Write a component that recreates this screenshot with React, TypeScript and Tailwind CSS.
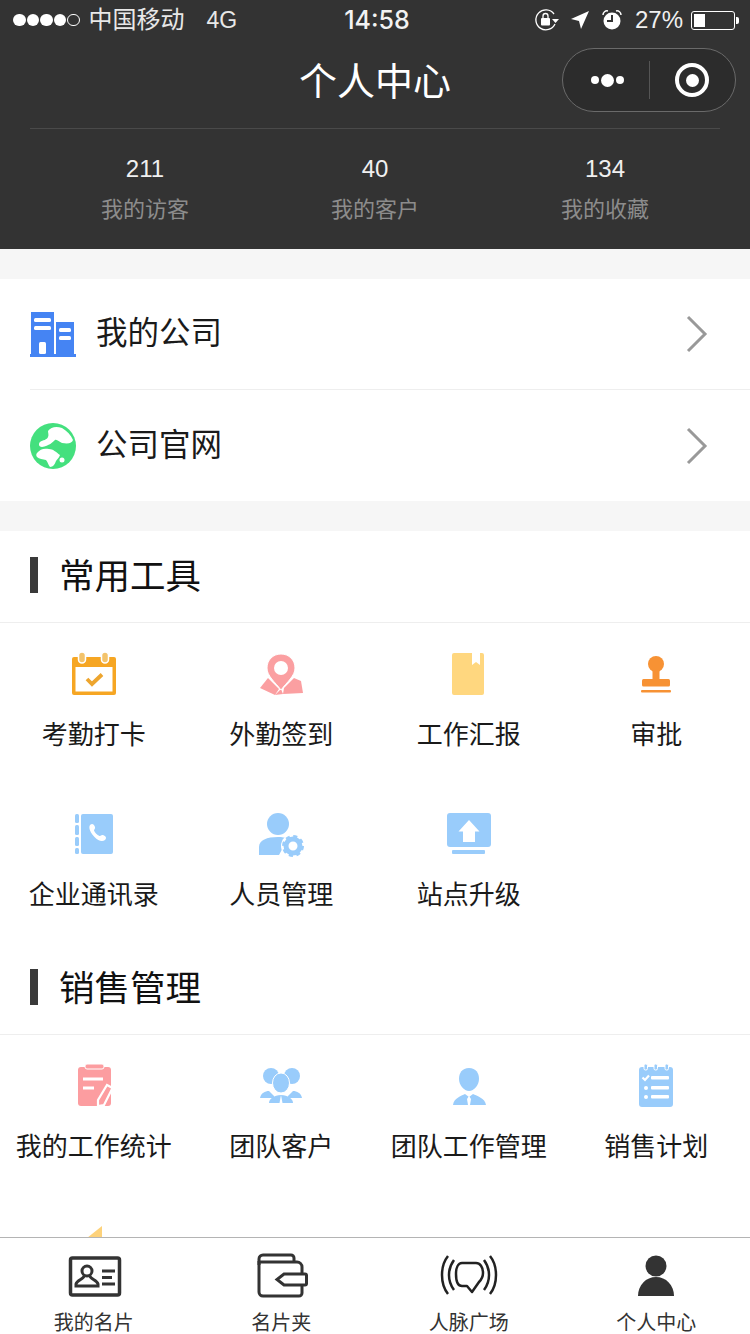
import type { ReactNode } from 'react'

const FONT = 'font-["Liberation_Sans","Noto_Sans_CJK_SC",sans-serif]'

function Svg48({ children }: { children: ReactNode }) {
  return (
    <svg width="48" height="48" viewBox="0 0 48 48">
      {children}
    </svg>
  )
}

function CalendarIcon() {
  return (
    <Svg48>
      <rect x="2" y="7" width="44" height="38" rx="2" fill="#f6a623" />
      <rect x="5.500" y="17" width="37" height="24.500" fill="#fff" />
      <rect x="8.500" y="2" width="7" height="11" rx="3.500" fill="#f3c36b" stroke="#fff" strokeWidth="1.500" />
      <rect x="31.500" y="2" width="7" height="11" rx="3.500" fill="#f3c36b" stroke="#fff" strokeWidth="1.500" />
      <path d="M17 29l5 5 10-9.500" fill="none" stroke="#eda52e" strokeWidth="3.800" />
    </Svg48>
  )
}

function PinIcon() {
  return (
    <Svg48>
      <path d="M3 38l8-10 11 11-4 6z" fill="#fb9fa1" />
      <path d="M27 38l10-10 7 3 2 12-20 1z" fill="#fb9fa1" />
      <path d="M18 45l6-6 2 5z" fill="#fb9fa1" />
      <path d="M24 4c8 0 14 6 14 14 0 8-8 14-14 22-6-8-14-14-14-22 0-8 6-14 14-14z" fill="#fb9fa1" stroke="#fff" strokeWidth="1" />
      <circle cx="24" cy="18" r="7" fill="#fff" />
    </Svg48>
  )
}

function BookIcon() {
  return (
    <Svg48>
      <path d="M9 3h18v12l4-3 4 3V3h2a2 2 0 0 1 2 2v38a2 2 0 0 1-2 2H9a2 2 0 0 1-2-2V5a2 2 0 0 1 2-2z" fill="#ffd77f" />
    </Svg48>
  )
}

function StampIcon() {
  return (
    <Svg48>
      <circle cx="24" cy="14" r="8" fill="#f79234" />
      <rect x="20.500" y="18" width="7" height="13" fill="#f79234" />
      <rect x="10" y="29" width="28" height="7.500" rx="1.500" fill="#f79234" />
      <rect x="9" y="40" width="30" height="2.500" rx="1" fill="#f79234" />
    </Svg48>
  )
}

function ContactIcon() {
  return (
    <Svg48>
      <rect x="5" y="4" width="4" height="9" rx="1.500" fill="#99ccfb" />
      <rect x="5" y="15" width="4" height="10" rx="1.500" fill="#99ccfb" />
      <rect x="5" y="27" width="4" height="9" rx="1.500" fill="#99ccfb" />
      <rect x="5" y="38" width="4" height="6" rx="1.500" fill="#99ccfb" />
      <rect x="11" y="4" width="32" height="40" rx="2" fill="#99ccfb" />
      <path d="M20 15c2-2 4-1 5 2 .5 1.500-1 2.500-1 3.500 1 2.500 3 4.500 5.500 5.500 1 0 2-1.500 3.500-1 3 1 4 3 2 5-3 2.500-7 .5-10.500-3-3.500-3.500-6.500-9-4.500-12z" fill="#fff" />
    </Svg48>
  )
}

function PersonGearIcon() {
  return (
    <Svg48>
      <circle cx="21" cy="14" r="11" fill="#99ccfb" />
      <path d="M2 45v-8c0-7 8-10 19-10 4 0 7 .5 10 1.500L22 45z" fill="#99ccfb" />
      <circle cx="36" cy="36" r="12" fill="#fff" />
      <circle cx="36" cy="36" r="7" fill="none" stroke="#99ccfb" strokeWidth="5" />
      <circle cx="36" cy="36" r="9.500" fill="none" stroke="#99ccfb" strokeWidth="3" strokeDasharray="4 3.450" />
    </Svg48>
  )
}

function UploadIcon() {
  return (
    <Svg48>
      <rect x="2" y="3" width="44" height="34" rx="3" fill="#99ccfb" />
      <path d="M24 10l10.500 11.500H30V32H18V21.500h-4.500z" fill="#fff" />
      <rect x="7" y="40" width="33" height="4" rx="1" fill="#99ccfb" />
    </Svg48>
  )
}

function ClipboardIcon() {
  return (
    <Svg48>
      <rect x="8" y="5" width="33" height="39" rx="3" fill="#fc9da0" />
      <rect x="15" y="2" width="19" height="5" rx="2" fill="#fc9da0" stroke="#fff" strokeWidth="1" />
      <rect x="13" y="15.500" width="20" height="3" fill="#fff" />
      <rect x="13" y="24.500" width="11" height="3" fill="#fff" />
      <path d="M37 23l5.500 3-8.500 17-6 1v-6z" fill="#fc9da0" stroke="#fff" strokeWidth="2.200" />
    </Svg48>
  )
}

function TeamIcon() {
  return (
    <Svg48>
      <circle cx="14" cy="14" r="8" fill="#99ccfb" />
      <circle cx="35" cy="14" r="8" fill="#99ccfb" />
      <path d="M3 36c1-5 5-7 9-7l5 5v2z" fill="#99ccfb" />
      <path d="M45 36c-1-5-5-7-9-7l-5 5v2z" fill="#99ccfb" />
      <ellipse cx="24" cy="21" rx="8.500" ry="10" fill="#99ccfb" stroke="#fff" strokeWidth="1" />
      <path d="M12 41c0-4 5-8 12-8s12 4 12 8z" fill="#99ccfb" />
      <path d="M24 33l-1.500 8h3z" fill="#fff" />
    </Svg48>
  )
}

function ManagerIcon() {
  return (
    <Svg48>
      <path d="M24 6c7 0 10 5 10 11 0 6-5 12-10 12s-10-6-10-12c0-6 3-11 10-11z" fill="#99ccfb" />
      <path d="M8 43c1-7 8-9 12-11l4 3 4-3c4 2 12 4 13 11z" fill="#99ccfb" />
      <path d="M24 34l2 3-1 6h-2l-1-6z" fill="#fff" />
    </Svg48>
  )
}

function PlanIcon() {
  return (
    <Svg48>
      <rect x="7" y="5" width="34" height="40" rx="3" fill="#99ccfb" />
      <g fill="#99ccfb" stroke="#fff" strokeWidth="1">
        <rect x="12" y="2" width="3.500" height="6" rx="1.500" />
        <rect x="22" y="2" width="3.500" height="6" rx="1.500" />
        <rect x="33" y="2" width="3.500" height="6" rx="1.500" />
      </g>
      <path d="M10.500 15.500l2.500 2.500 4-4.500" fill="none" stroke="#fff" strokeWidth="2.200" />
      <circle cx="14" cy="26" r="2" fill="#fff" />
      <circle cx="14" cy="35" r="2" fill="#fff" />
      <rect x="19" y="14" width="18" height="3.500" rx="1" fill="#fff" />
      <rect x="19" y="24" width="18" height="3.500" rx="1" fill="#fff" />
      <rect x="19" y="33" width="18" height="3.500" rx="1" fill="#fff" />
    </Svg48>
  )
}

function PartialIcon() {
  return (
    <Svg48>
      <path d="M32 4L17 16l-9 20h24z" fill="#fdd27b" />
    </Svg48>
  )
}

function CompanyIcon() {
  return (
    <svg width="46" height="46" viewBox="0 0 46 46">
      <rect x="1" y="1" width="23" height="42" fill="#4584f3" />
      <rect x="26" y="11" width="18" height="32" fill="#4584f3" />
      <rect x="0" y="43" width="46" height="3" fill="#4584f3" />
      <rect x="4" y="7" width="17" height="4" rx="1.500" fill="#fff" />
      <rect x="4" y="15" width="17" height="4" rx="1.500" fill="#fff" />
      <rect x="9" y="31" width="7" height="12" rx="1.500" fill="#fff" />
      <rect x="29" y="17" width="12" height="4" rx="1.500" fill="#fff" />
      <rect x="29" y="25" width="12" height="4" rx="1.500" fill="#fff" />
    </svg>
  )
}

function GlobeIcon() {
  return (
    <svg width="46" height="46" viewBox="0 0 46 46">
      <circle cx="23" cy="23" r="23" fill="#44e07e" />
      <path d="M18 8c3-4 8-5 14-3 5 3 9 7 11 12-1 3-4 4-11 3-3-1-5-4-7-3-2 2-6 6-13 7-3 0-4-3-2-5 3-2 7-2 8-5 1-2 0-4 0-6z" fill="#fff" />
      <path d="M7 30c3-4 7-5 12-4 4 0 7 3 11 6-1 3-3 4-4 6-1 3-3 6-6 6-2-2-2-5-4-7-3-1-7-1-9-3-1-1-1-3 0-4z" fill="#fff" />
      <circle cx="32" cy="37" r="2.500" fill="#fff" />
    </svg>
  )
}

function Chevron() {
  return (
    <svg width="22" height="38" viewBox="0 0 22 38">
      <path d="M2 2l17 17L2 36" fill="none" stroke="#999" strokeWidth="3" />
    </svg>
  )
}

function StatusBar() {
  return (
    <div className="flex h-[40px] items-center justify-between pl-[13px] pr-[11px] text-white">
      <div className="flex w-[300px] items-center">
        <div className="flex items-center gap-[1px]">
          {[0, 1, 2, 3].map((i) => (
            <span key={i} className="h-[12.5px] w-[12.5px] rounded-full bg-white" />
          ))}
          <span className="h-[12.5px] w-[12.5px] rounded-full border border-white" />
        </div>
        <span className="ml-[9px] text-[24px] leading-none text-[#e8e8e8]">中国移动</span>
        <span className="ml-[22px] text-[23px] leading-none text-[#e8e8e8]">4G</span>
      </div>
      <span className='font-["Inter",sans-serif] ml-[2px] text-[25px] font-medium leading-none text-[#f2f2f2]'>14:58</span>
      <div className="flex w-[300px] items-center justify-end">
        <svg width="26" height="24" viewBox="0 0 26 24">
          <path d="M20 6a10 10 0 1 0 1 10" fill="none" stroke="#fff" strokeWidth="1.300" />
          <path d="M18 11h7l-3.500 4z" fill="#fff" />
          <rect x="7" y="10" width="9" height="7.500" rx="1" fill="#fff" />
          <path d="M9 10V8a2.500 2.500 0 0 1 5 0v2" fill="none" stroke="#fff" strokeWidth="1.300" />
        </svg>
        <svg className="ml-[10px]" width="20" height="20" viewBox="0 0 20 20">
          <path d="M19 1L1 9l8 2 2 8z" fill="#fff" />
        </svg>
        <svg className="ml-[11px]" width="22" height="22" viewBox="0 0 22 22">
          <circle cx="11" cy="12" r="8.500" fill="#fff" />
          <path d="M11 6v6H6" fill="none" stroke="#333" strokeWidth="2" />
          <path d="M2 6a4 4 0 0 1 5-4M20 6a4 4 0 0 0-5-4" fill="none" stroke="#fff" strokeWidth="1.500" />
        </svg>
        <span className="ml-[12px] text-[24px] leading-none text-[#f0f0f0]">27%</span>
        <div className="ml-[8px] flex items-center">
          <div className="h-[19px] w-[44px] rounded-[3px] border border-white p-[2px]">
            <div className="h-full w-[11px] bg-white" />
          </div>
          <span className="ml-[1px] h-[7px] w-[3px] rounded-r-[2px] bg-white" />
        </div>
      </div>
    </div>
  )
}

function Capsule() {
  return (
    <div className="absolute right-[14px] top-[8px] flex h-[64px] w-[174px] items-center rounded-full border border-[#6a6a6a] bg-[#2c2c2c]">
      <div className="flex w-[86px] items-center justify-center gap-[2px] pl-[2px]">
        <span className="h-[8px] w-[8px] rounded-full bg-white" />
        <span className="h-[13px] w-[13px] rounded-full bg-white" />
        <span className="h-[8px] w-[8px] rounded-full bg-white" />
      </div>
      <div className="h-[38px] w-px bg-[#555]" />
      <div className="flex flex-1 items-center justify-center pr-[1px]">
        <span className="flex h-[34px] w-[34px] items-center justify-center rounded-full border-[4px] border-white">
          <span className="h-[13px] w-[13px] rounded-full bg-white" />
        </span>
      </div>
    </div>
  )
}

function Stat({ value, label }: { value: string; label: string }) {
  return (
    <div className="flex flex-col items-center">
      <span className="text-[24px] leading-[30px] text-[#f0f0f0]">{value}</span>
      <span className="mt-[11px] text-[22px] leading-[30px] text-[#8c8c8c]">{label}</span>
    </div>
  )
}

function LinkRow({ icon, label, divider }: { icon: ReactNode; label: string; divider?: boolean }) {
  return (
    <div className="pl-[30px]">
      <div className={`flex h-[111px] items-center pr-[42px] ${divider ? 'border-b border-[#eeeeee]' : ''}`}>
        {icon}
        <span className="ml-[20px] flex-1 text-[31.5px] leading-none text-[#1a1a1a]">{label}</span>
        <Chevron />
      </div>
    </div>
  )
}

function SectionTitle({ title }: { title: string }) {
  return (
    <div className="flex h-[92px] items-start border-b border-[#eeeeee] pl-[30px] pt-[26px]">
      <span className="h-[36px] w-[8px] bg-[#3a3a3a]" />
      <span className="ml-[21px] mt-[2px] text-[35.5px] leading-[36px] text-[#111]">{title}</span>
    </div>
  )
}

type ToolItem = { label: string; icon: ReactNode }

function ToolGrid({ items }: { items: ToolItem[] }) {
  return (
    <div className="grid grid-cols-4">
      {items.map((item, i) => (
        <div key={i} className="flex h-[160px] flex-col items-center pt-[27px]">
          {item.icon}
          <span className="mt-[19px] whitespace-nowrap text-[26px] leading-[36px] text-[#1a1a1a]">{item.label}</span>
        </div>
      ))}
    </div>
  )
}

const commonTools: ToolItem[] = [
  { label: '考勤打卡', icon: <CalendarIcon /> },
  { label: '外勤签到', icon: <PinIcon /> },
  { label: '工作汇报', icon: <BookIcon /> },
  { label: '审批', icon: <StampIcon /> },
  { label: '企业通讯录', icon: <ContactIcon /> },
  { label: '人员管理', icon: <PersonGearIcon /> },
  { label: '站点升级', icon: <UploadIcon /> },
]

const salesTools: ToolItem[] = [
  { label: '我的工作统计', icon: <ClipboardIcon /> },
  { label: '团队客户', icon: <TeamIcon /> },
  { label: '团队工作管理', icon: <ManagerIcon /> },
  { label: '销售计划', icon: <PlanIcon /> },
  { label: '', icon: <PartialIcon /> },
]

function TabIcon({ children }: { children: ReactNode }) {
  return (
    <svg width="60" height="48" viewBox="0 0 60 48" fill="none" stroke="#333" strokeWidth="3">
      {children}
    </svg>
  )
}

function TabBar() {
  const tabs = [
    {
      label: '我的名片',
      icon: (
        <TabIcon>
          <rect x="6.500" y="7" width="49" height="37" rx="2" strokeWidth="3.500" />
          <circle cx="23" cy="20" r="5" strokeWidth="3" />
          <path d="M20 25c0 3-7 4-8 8v2h22v-2c-1-4-8-5-8-8" strokeWidth="3" />
          <path d="M38 20h13M38 26.500h10M38 33h13" strokeWidth="2.800" />
        </TabIcon>
      ),
    },
    {
      label: '名片夹',
      icon: (
        <TabIcon>
          <path d="M8 14V8a4 4 0 0 1 4-4h28a3 3 0 0 1 3 3v4" strokeWidth="3" />
          <path d="M8 10v31a4 4 0 0 0 4 4h36a3 3 0 0 0 3-3v-8M8 11h38a5 5 0 0 1 5 5v6" strokeWidth="3" />
          <path d="M33 23h21a1.500 1.500 0 0 1 1.500 1.500v8a1.500 1.500 0 0 1-1.500 1.500H33l-7-5.500z" strokeWidth="3" />
        </TabIcon>
      ),
    },
    {
      label: '人脉广场',
      icon: (
        <TabIcon>
          <path d="M9 5C1 15 1 33 9 43M51 5c8 10 8 28 0 38" stroke="#222" strokeWidth="2.500" />
          <path d="M15 9c-6.700 9-6.700 21 0 30M45 9c6.700 9 6.700 21 0 30" stroke="#222" strokeWidth="2.500" />
          <path d="M23 12h14c4 0 7 4 7 10 0 4-2 7-4 9l-7 10-5-6h-5c-4 0-6-5-6-12 0-6 2-11 6-11z" stroke="#222" strokeWidth="2.500" strokeLinejoin="round" />
        </TabIcon>
      ),
    },
    {
      label: '个人中心',
      icon: (
        <TabIcon>
          <circle cx="30" cy="15" r="10.500" fill="#333" stroke="none" />
          <path d="M12 45c0-11 8-19 18-19s18 8 18 19z" fill="#333" stroke="none" />
        </TabIcon>
      ),
    },
  ]

  return (
    <div className="grid h-[97px] shrink-0 grid-cols-4 overflow-hidden border-t border-[#b4b4b4] bg-white">
      {tabs.map((tab) => (
        <div key={tab.label} className="flex flex-col items-center pt-[13px]">
          {tab.icon}
          <span className="mt-[10px] text-[20px] leading-[28px] text-[#333]">{tab.label}</span>
        </div>
      ))}
    </div>
  )
}

export default function App() {
  return (
    <div className={`flex h-[1334px] w-[750px] flex-col overflow-hidden bg-white ${FONT}`}>
      <main className="min-h-0 flex-1 overflow-hidden">
        <header className="h-[249px] bg-[#333333]">
          <StatusBar />
          <div className="relative flex h-[88px] items-center justify-center pb-[4px]">
            <h1 className="text-[38px] font-normal leading-none text-white">个人中心</h1>
            <Capsule />
          </div>
          <div className="mx-[30px] grid grid-cols-3 border-t border-[#4a4a4a] pt-[25px]">
            <Stat value="211" label="我的访客" />
            <Stat value="40" label="我的客户" />
            <Stat value="134" label="我的收藏" />
          </div>
        </header>

        <div className="h-[30px] bg-[#f6f6f6]" />
        <LinkRow icon={<CompanyIcon />} label="我的公司" divider />
        <LinkRow icon={<GlobeIcon />} label="公司官网" />
        <div className="h-[30px] bg-[#f6f6f6]" />

        <SectionTitle title="常用工具" />
        <ToolGrid items={commonTools} />
        <SectionTitle title="销售管理" />
        <ToolGrid items={salesTools} />
      </main>
      <TabBar />
    </div>
  )
}
